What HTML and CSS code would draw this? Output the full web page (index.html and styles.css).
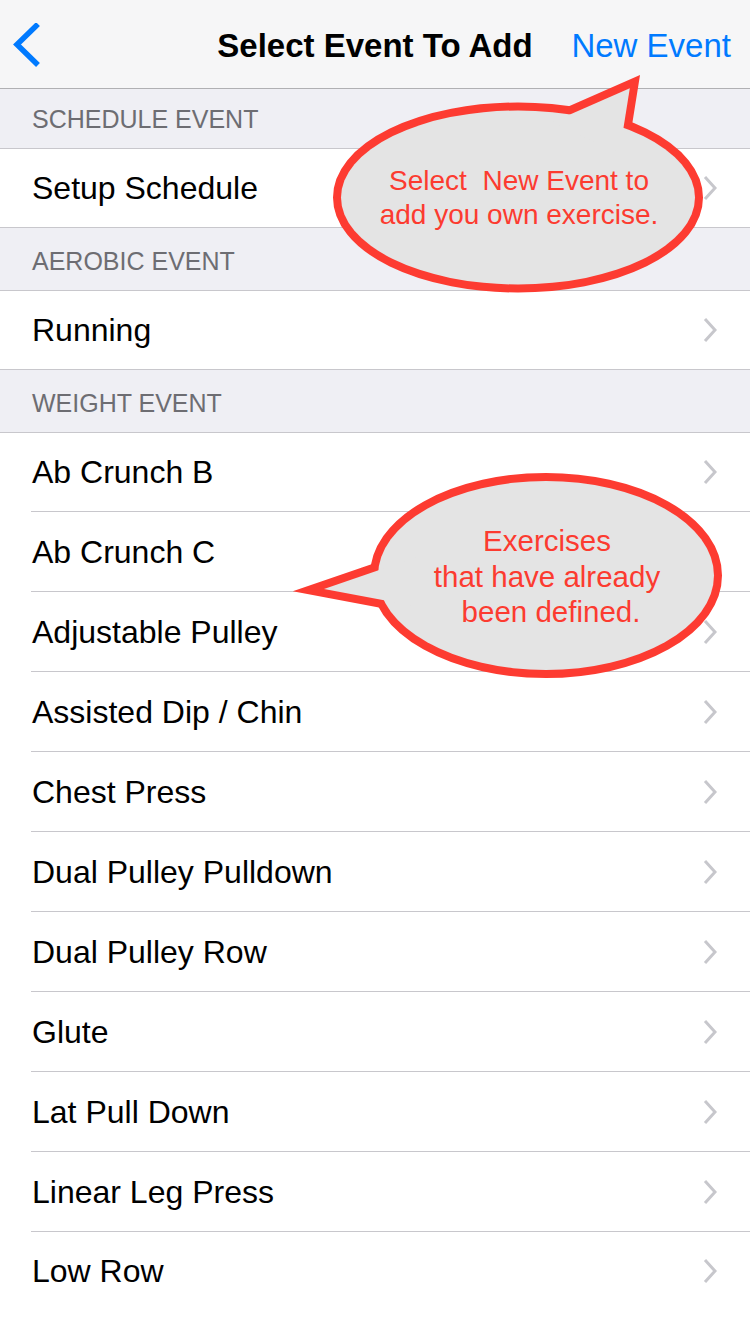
FILE: index.html
```html
<!DOCTYPE html>
<html lang="en">
<head>
<meta charset="utf-8">
<title>Select Event To Add</title>
<link rel="stylesheet" href="styles.css">
</head>
<body>
<div class="screen">
  <header class="nav">
    <div class="nav-left">
      <svg class="back-icon" width="30" height="44" viewBox="0 0 30 44" aria-hidden="true">
        <path d="M23 3 L4 21.5 L23 40" fill="none" stroke="#007aff" stroke-width="5.5" stroke-linecap="square" stroke-linejoin="miter"/>
      </svg>
    </div>
    <div class="nav-title">Select Event To Add</div>
    <div class="nav-right">New Event</div>
  </header>

  <div class="section-header first">SCHEDULE EVENT</div>
  <ul class="group">
    <li class="row"><div class="row-inner"><span>Setup Schedule</span><svg class="chev" width="14" height="26" viewBox="0 0 14 26"><path d="M2 2 L12 13 L2 24" fill="none" stroke="#c7c7cc" stroke-width="3"/></svg></div></li>
  </ul>

  <div class="section-header">AEROBIC EVENT</div>
  <ul class="group">
    <li class="row"><div class="row-inner"><span>Running</span><svg class="chev" width="14" height="26" viewBox="0 0 14 26"><path d="M2 2 L12 13 L2 24" fill="none" stroke="#c7c7cc" stroke-width="3"/></svg></div></li>
  </ul>

  <div class="section-header">WEIGHT EVENT</div>
  <ul class="group open">
    <li class="row"><div class="row-inner"><span>Ab Crunch B</span><svg class="chev" width="14" height="26" viewBox="0 0 14 26"><path d="M2 2 L12 13 L2 24" fill="none" stroke="#c7c7cc" stroke-width="3"/></svg></div></li>
    <li class="row"><div class="row-inner"><span>Ab Crunch C</span><svg class="chev" width="14" height="26" viewBox="0 0 14 26"><path d="M2 2 L12 13 L2 24" fill="none" stroke="#c7c7cc" stroke-width="3"/></svg></div></li>
    <li class="row"><div class="row-inner"><span>Adjustable Pulley</span><svg class="chev" width="14" height="26" viewBox="0 0 14 26"><path d="M2 2 L12 13 L2 24" fill="none" stroke="#c7c7cc" stroke-width="3"/></svg></div></li>
    <li class="row"><div class="row-inner"><span>Assisted Dip / Chin</span><svg class="chev" width="14" height="26" viewBox="0 0 14 26"><path d="M2 2 L12 13 L2 24" fill="none" stroke="#c7c7cc" stroke-width="3"/></svg></div></li>
    <li class="row"><div class="row-inner"><span>Chest Press</span><svg class="chev" width="14" height="26" viewBox="0 0 14 26"><path d="M2 2 L12 13 L2 24" fill="none" stroke="#c7c7cc" stroke-width="3"/></svg></div></li>
    <li class="row"><div class="row-inner"><span>Dual Pulley Pulldown</span><svg class="chev" width="14" height="26" viewBox="0 0 14 26"><path d="M2 2 L12 13 L2 24" fill="none" stroke="#c7c7cc" stroke-width="3"/></svg></div></li>
    <li class="row"><div class="row-inner"><span>Dual Pulley Row</span><svg class="chev" width="14" height="26" viewBox="0 0 14 26"><path d="M2 2 L12 13 L2 24" fill="none" stroke="#c7c7cc" stroke-width="3"/></svg></div></li>
    <li class="row"><div class="row-inner"><span>Glute</span><svg class="chev" width="14" height="26" viewBox="0 0 14 26"><path d="M2 2 L12 13 L2 24" fill="none" stroke="#c7c7cc" stroke-width="3"/></svg></div></li>
    <li class="row"><div class="row-inner"><span>Lat Pull Down</span><svg class="chev" width="14" height="26" viewBox="0 0 14 26"><path d="M2 2 L12 13 L2 24" fill="none" stroke="#c7c7cc" stroke-width="3"/></svg></div></li>
    <li class="row"><div class="row-inner"><span>Linear Leg Press</span><svg class="chev" width="14" height="26" viewBox="0 0 14 26"><path d="M2 2 L12 13 L2 24" fill="none" stroke="#c7c7cc" stroke-width="3"/></svg></div></li>
    <li class="row"><div class="row-inner"><span>Low Row</span><svg class="chev" width="14" height="26" viewBox="0 0 14 26"><path d="M2 2 L12 13 L2 24" fill="none" stroke="#c7c7cc" stroke-width="3"/></svg></div></li>
  </ul>

  <svg class="callouts" width="750" height="1334" viewBox="0 0 750 1334">
    <g class="bubble-stroke">
      <ellipse cx="518" cy="197.5" rx="177" ry="87"/>
      <polygon points="551.7,122.6 629.8,88.2 619.5,152.7"/>
      <ellipse cx="546" cy="575.5" rx="168" ry="94.5"/>
      <polygon points="420,556 324,589 420,607"/>
    </g>
    <g class="bubble-fill">
      <ellipse cx="518" cy="197.5" rx="177" ry="87"/>
      <polygon points="551.7,122.6 629.8,88.2 619.5,152.7"/>
      <ellipse cx="546" cy="575.5" rx="168" ry="94.5"/>
      <polygon points="420,556 324,589 420,607"/>
    </g>
    <g class="bubble-text">
      <text class="t1" x="519" y="190">Select  New Event to</text>
      <text class="t1" x="519" y="224">add you own exercise.</text>
      <text class="t2" x="547" y="551">Exercises</text>
      <text class="t2" x="547" y="587">that have already</text>
      <text class="t2" x="551" y="622">been defined.</text>
    </g>
  </svg>
</div>
</body>
</html>
```

FILE: styles.css
```css
* { box-sizing: border-box; }

html, body {
  margin: 0;
  padding: 0;
  background: #ffffff;
}

body {
  font-family: "Liberation Sans", Arial, Helvetica, sans-serif;
}

.screen {
  position: relative;
  width: 750px;
  min-height: 1334px;
  overflow: hidden;
  background: #ffffff;
}

/* Navigation bar */
.nav {
  height: 89px;
  background: #f6f6f7;
  border-bottom: 1px solid #b0b0b3;
  display: grid;
  grid-template-columns: 1fr auto 1fr;
  align-items: center;
}

.nav-left {
  display: flex;
  align-items: center;
  padding-left: 13px;
}

.back-icon {
  display: block;
  margin-top: 1px;
}

.nav-title {
  font-size: 33px;
  font-weight: bold;
  color: #000000;
  line-height: 1;
  padding-top: 2px;
}

.nav-right {
  justify-self: end;
  padding-right: 19px;
  font-size: 33px;
  color: #007aff;
  line-height: 1;
  padding-top: 2px;
}

/* Section headers */
.section-header {
  height: 63px;
  background: #efeff4;
  border-bottom: 1px solid #c8c7cc;
  display: flex;
  align-items: flex-end;
  padding: 0 0 16px 32px;
  font-size: 25px;
  line-height: 25px;
  color: #6d6d72;
}

.section-header.first {
  height: 60px;
}

/* Groups and rows */
.group {
  list-style: none;
  margin: 0;
  padding: 0;
  background: #ffffff;
  border-bottom: 1px solid #c8c7cc;
}

.group.open {
  border-bottom: none;
}

.row {
  padding-left: 31px;
}

.row-inner {
  height: 80px;
  display: flex;
  align-items: center;
  justify-content: space-between;
  padding-left: 1px;
  padding-right: 33px;
  border-bottom: 1px solid #c8c7cc;
  font-size: 32px;
  line-height: 1;
  color: #000000;
}

.row:first-child .row-inner {
  height: 79px;
}

.row:last-child .row-inner {
  border-bottom: none;
  height: 78px;
}

.chev {
  display: block;
  flex: none;
}

/* Annotation callouts */
.callouts {
  position: absolute;
  left: 0;
  top: 0;
  pointer-events: none;
}

.bubble-stroke ellipse,
.bubble-stroke polygon {
  fill: #fd3b31;
  stroke: #fd3b31;
  stroke-width: 16;
  stroke-linejoin: miter;
  stroke-miterlimit: 10;
}

.bubble-fill ellipse,
.bubble-fill polygon {
  fill: #e4e4e4;
  stroke: none;
}

.bubble-text text {
  font-family: "Liberation Sans", Arial, Helvetica, sans-serif;
  fill: #fc3b30;
  text-anchor: middle;
  white-space: pre;
}

.bubble-text .t1 {
  font-size: 28px;
}

.bubble-text .t2 {
  font-size: 29.5px;
}
```
